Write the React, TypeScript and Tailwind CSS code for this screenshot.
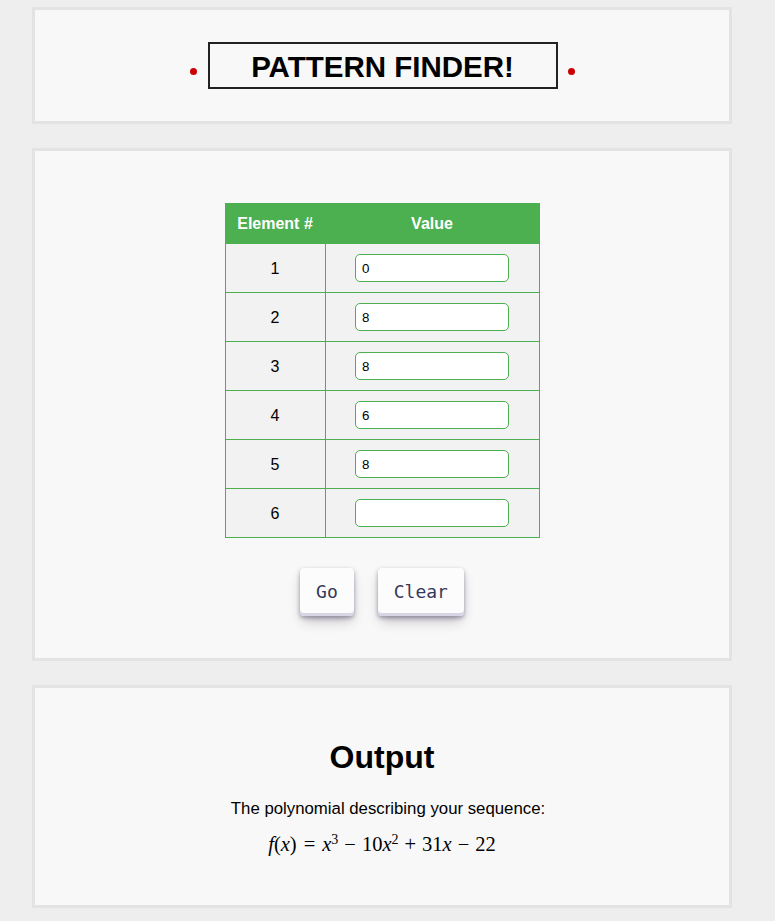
import React, { useState } from 'react'

const Card = ({ className, children }: { className: string; children: React.ReactNode }) => (
  <div className={`border-[3px] border-[#e3e3e3] bg-[#f8f8f8] ${className}`}>{children}</div>
)

const App = () => {
  const [values, setValues] = useState(['0', '8', '8', '6', '8', ''])

  const update = (i: number, v: string) => {
    const next = [...values]
    next[i] = v
    setValues(next)
  }

  const btn =
    "h-[48px] px-4 pb-[2px] rounded-[4px] bg-[#fcfcfd] text-[18px] text-[#36395a] font-['DejaVu_Sans_Mono',monospace] shadow-[0_2px_4px_rgba(45,35,66,0.4),0_7px_13px_-3px_rgba(45,35,66,0.3),inset_0_-3px_0_#d6d6e7]"

  return (
    <div className="min-h-screen bg-[#eeeeee] pt-[7px] pb-[13px] font-['Liberation_Sans',Arial,sans-serif] text-black">
      <div className="ml-[32px] w-[700px] flex flex-col gap-[24px]">
        {/* Title */}
        <Card className="h-[117px] flex items-center justify-center">
          <span className="mt-[11px] mr-[11px] w-[7px] h-[7px] rounded-full bg-[#cc0000]" />
          <div className="w-[350px] h-[47px] border-2 border-[#222] flex items-center justify-center">
            <h1 className="mt-[3px] text-[29.5px] font-bold leading-none">PATTERN FINDER!</h1>
          </div>
          <span className="mt-[11px] ml-[10px] w-[7px] h-[7px] rounded-full bg-[#cc0000]" />
        </Card>

        {/* Inputs */}
        <Card className="pt-[52px] pb-[42px] flex flex-col items-center">
          <table className="border-collapse bg-[#f2f2f2] w-[315px]">
            <thead>
              <tr className="h-[40px] bg-[#4caf50] text-white text-[16px] font-bold">
                <th className="w-[100px] border border-[#4caf50]">Element #</th>
                <th className="border border-[#4caf50]">Value</th>
              </tr>
            </thead>
            <tbody>
              {values.map((v, i) => (
                <tr key={i} className="h-[49px]">
                  <td className="pt-[2px] border border-[#4caf50] text-center text-[16px]">{i + 1}</td>
                  <td className="border border-[#4caf50] text-center">
                    <input
                      value={v}
                      onChange={(e) => update(i, e.target.value)}
                      className="w-[154px] h-[28px] px-[6px] bg-white border border-[#4caf50] rounded-[5px] text-[13.33px] font-['Liberation_Sans',Arial,sans-serif] outline-none align-middle"
                    />
                  </td>
                </tr>
              ))}
            </tbody>
          </table>

          <div className="mt-[30px] flex gap-[24px]">
            <button className={btn}>Go</button>
            <button className={btn}>Clear</button>
          </div>
        </Card>

        {/* Output */}
        <Card className="h-[223px] pt-[51px] flex flex-col items-center">
          <h2 className="text-[32px] font-bold leading-[37px]">Output</h2>
          <p className="mt-[23px] ml-[12px] text-[16.8px] leading-[19px]">The polynomial describing your sequence:</p>
          <div className="mt-[13px] text-[20.5px] leading-[26px] font-['Liberation_Serif','DejaVu_Serif',serif]">
            <i>f</i>(<i>x</i>)<span className="mx-[7px]">=</span>
            <i>x</i>
            <sup className="text-[14px]">3</sup>
            <span className="mx-[6px]">−</span>10<i>x</i>
            <sup className="text-[14px]">2</sup>
            <span className="mx-[6px]">+</span>31<i>x</i>
            <span className="mx-[6px]">−</span>22
          </div>
        </Card>
      </div>
    </div>
  )
}

export default App
